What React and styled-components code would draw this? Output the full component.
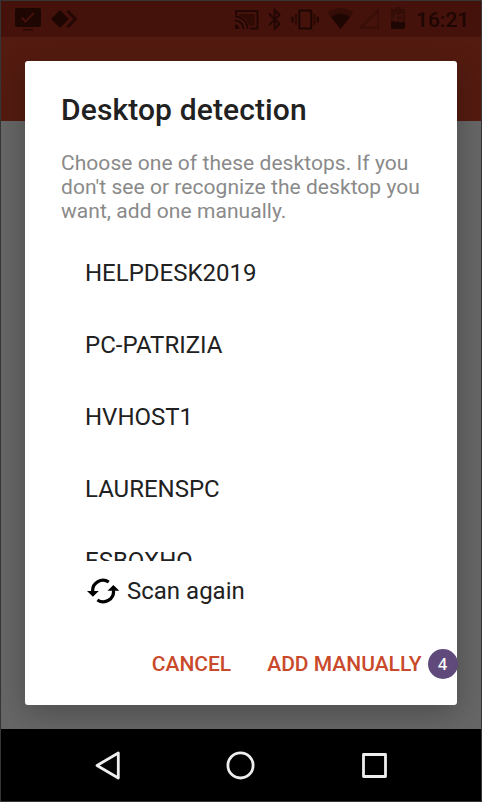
import React from "react";
import styled, { createGlobalStyle } from "styled-components";

const GlobalStyle = createGlobalStyle`
  * { box-sizing: border-box; }
  body { margin: 0; background: #333; font-family: Roboto, sans-serif; }
`;

const Screen = styled.div`
  position: relative;
  display: flex;
  flex-direction: column;
  width: 482px;
  height: 802px;
  border: 1px solid #353535;
  overflow: hidden;
  background: #666;
`;

const StatusBar = styled.header`
  display: flex;
  justify-content: space-between;
  flex: 0 0 36px;
  height: 36px;
  padding: 0 13px 0 13px;
  background: #44110b;
  color: #1e0603;
`;

const StatusGroup = styled.div`
  display: flex;
  align-items: center;
  height: 36px;
  gap: ${(p) => p.$gap}px;
`;

const StatusIcon = styled.svg`
  display: block;
  height: 36px;
  width: ${(p) => p.$w}px;
  fill: none;
  stroke: none;
`;

const Clock = styled.time`
  width: 52px;
  height: 36px;
  margin-left: 4px;
  font-size: 21px;
  line-height: 38px;
  font-weight: 500;
  white-space: nowrap;
`;

const AppBar = styled.div`
  flex: 0 0 84px;
  background: #541b10;
`;

const Backdrop = styled.div`
  flex: 1;
`;

const NavBar = styled.nav`
  display: flex;
  justify-content: space-between;
  align-items: center;
  position: relative;
  flex: 0 0 72px;
  padding: 0 92px;
  background: #000;
`;

const NavIcon = styled.svg`
  width: 30px;
  height: 32px;
  fill: none;
  stroke: #eee;
  stroke-width: 2.8;
  stroke-linejoin: round;
`;

const Dialog = styled.section`
  position: absolute;
  left: 24px;
  top: 60px;
  width: 432px;
  height: 644px;
  display: flex;
  flex-direction: column;
  padding-top: 27px;
  border-radius: 3px;
  background: #fff;
  box-shadow: 0 8px 30px rgba(0, 0, 0, 0.25);
`;

const Title = styled.h1`
  margin: 0 36px;
  font-size: 30px;
  line-height: 44px;
  font-weight: 500;
  letter-spacing: 0.12px;
  color: #212121;
  white-space: nowrap;
`;

const Message = styled.p`
  margin: 19px 0 0 36px;
  font-size: 21px;
  line-height: 24px;
  letter-spacing: 0.05px;
  color: #8a8a8a;
  white-space: nowrap;
`;

const DesktopList = styled.ul`
  list-style: none;
  height: 324px;
  margin: 14px 0 0;
  padding: 0;
  overflow: hidden;
`;

const DesktopItem = styled.li`
  height: 72px;
  padding-left: 60px;
  font-size: 24px;
  line-height: 72px;
  color: #212121;
`;

const ScanButton = styled.button`
  display: flex;
  align-items: center;
  gap: 7px;
  height: 60px;
  padding: 0 0 0 61px;
  border: 0;
  background: none;
  font: 400 24px Roboto, sans-serif;
  color: #212121;
`;

const ScanIcon = styled.svg`
  width: 34px;
  height: 28px;
`;

const Actions = styled.footer`
  display: flex;
  align-items: center;
  justify-content: flex-end;
  height: 54px;
  margin-top: 16px;
`;

const ActionButton = styled.button`
  margin: 0 ${(p) => p.$after}px 0 0;
  padding: 0;
  border: 0;
  background: none;
  font: 500 21px Roboto, sans-serif;
  color: #c9492b;
  white-space: nowrap;
`;

const StepBadge = styled.span`
  width: 30px;
  height: 30px;
  margin-right: -0.5px;
  border-radius: 50%;
  background: #604a7b;
  color: #fff;
  font: 600 16px/30px "Open Sans", sans-serif;
  text-align: center;
`;

const desktops = ["HELPDESK2019", "PC-PATRIZIA", "HVHOST1", "LAURENSPC", "ESBOXHQ"];

function LeftIcons() {
  return (
    <StatusGroup $gap={8}>
      <StatusIcon $w={28} viewBox="14 1 28 36">
        <rect x="15" y="8" width="26" height="19" rx="2" fill="#1e0603" />
        <path d="M21.5 17.5l4 4 8.5-8.5" stroke="#44110b" strokeWidth="2" />
        <path d="M23 29.7h10" stroke="#2b0905" strokeWidth="1.6" />
      </StatusIcon>
      <StatusIcon $w={28} viewBox="50 1 28 36">
        <path d="M60 10l8.8 9-8.8 9-9-9z" fill="#1e0603" />
        <path d="M67.5 11l8 8-8 8" stroke="#240704" strokeWidth="2.8" />
      </StatusIcon>
    </StatusGroup>
  );
}

function RightIcons() {
  return (
    <StatusGroup $gap={6}>
      <StatusIcon $w={26} viewBox="234 1 26 36">
        <g stroke="#220704" strokeWidth="1.9">
          <path d="M236 15v-4h21.5v17.5H250" />
          <path d="M235 20.5a8.5 8.5 0 0 1 8.5 8.5M235 16.5a12.5 12.5 0 0 1 12.5 12.5" />
        </g>
        <path d="M239 14h15.5v11.5H249a14 14 0 0 0-10-10z" fill="#300b06" />
        <path d="M235 24.5a4.5 4.5 0 0 1 4.5 4.5H235z" fill="#220704" />
      </StatusIcon>
      <StatusIcon $w={18} viewBox="265 1 18 36">
        <path
          d="M268 13.5l10.5 10.5-4.8 4.8V10l4.8 4.8L268 25.2"
          stroke="#220704"
          strokeWidth="1.9"
        />
      </StatusIcon>
      <StatusIcon $w={30} viewBox="289.5 1 30 36">
        <rect x="298.8" y="10.5" width="12" height="18" rx="1" stroke="#1e0603" strokeWidth="2" />
        <path d="M295.5 14v11M314 14v11" stroke="#2a0905" strokeWidth="1.8" />
        <path d="M292 16.5v6M317.3 16.5v6" stroke="#1e0603" strokeWidth="2" />
      </StatusIcon>
      <StatusIcon $w={28} viewBox="325 1 28 36">
        <path d="M326.5 12.5q13-9 26 0L339.5 29z" fill="#340d07" />
        <path d="M330 17q9.5-7 19 0L339.5 29z" fill="#1e0603" />
      </StatusIcon>
      <StatusIcon $w={24} viewBox="358 1 24 36">
        <path d="M358.5 27.7L376 10.5v17.2z" stroke="#380e08" strokeWidth="2" />
      </StatusIcon>
      <StatusIcon $w={16} viewBox="389 1 16 36">
        <path d="M391 9h3.5V7.2h5V9h3.5q1 0 1 1v11.5h-14V10q0-1 1-1z" fill="#340d07" />
        <path d="M390 21.5h14V28q0 1-1 1h-12q-1 0-1-1z" fill="#1e0603" />
        <text
          x="397"
          y="22"
          textAnchor="middle"
          fontFamily="Roboto"
          fontSize="10"
          fontWeight="500"
          fill="#48150e"
        >
          42
        </text>
      </StatusIcon>
      <Clock>16:21</Clock>
    </StatusGroup>
  );
}

export default function App() {
  return (
    <>
      <GlobalStyle />
      <Screen>
        <StatusBar>
          <LeftIcons />
          <RightIcons />
        </StatusBar>
        <AppBar />
        <Backdrop />
        <Dialog role="dialog">
          <Title>Desktop detection</Title>
          <Message>
            Choose one of these desktops. If you
            <br />
            don't see or recognize the desktop you
            <br />
            want, add one manually.
          </Message>
          <DesktopList>
            {desktops.map((name) => (
              <DesktopItem key={name}>{name}</DesktopItem>
            ))}
          </DesktopList>
          <ScanButton>
            <ScanIcon viewBox="86 577 34 28">
              <g fill="none" stroke="#000" strokeWidth="3.2">
                <path d="M92.8 592a10.3 10.3 0 0 1 16-10" />
                <path d="M113.4 590a10.3 10.3 0 0 1-16 10" />
              </g>
              <path d="M87 591h11.8l-5.9 5.8zM107.5 590.8h11.8l-5.9-5.8z" />
            </ScanIcon>
            Scan again
          </ScanButton>
          <Actions>
            <ActionButton $after={36}>CANCEL</ActionButton>
            <ActionButton $after={6}>ADD MANUALLY</ActionButton>
            <StepBadge>4</StepBadge>
          </Actions>
        </Dialog>
        <NavBar>
          <NavIcon viewBox="93 749 30 32">
            <path d="M97 765.5L118.3 753v25z" />
          </NavIcon>
          <NavIcon viewBox="226 749 30 32">
            <circle cx="240.5" cy="765.4" r="12.6" />
          </NavIcon>
          <NavIcon viewBox="359 749 30 32">
            <rect x="363.5" y="754.5" width="22" height="22" />
          </NavIcon>
        </NavBar>
      </Screen>
    </>
  );
}
